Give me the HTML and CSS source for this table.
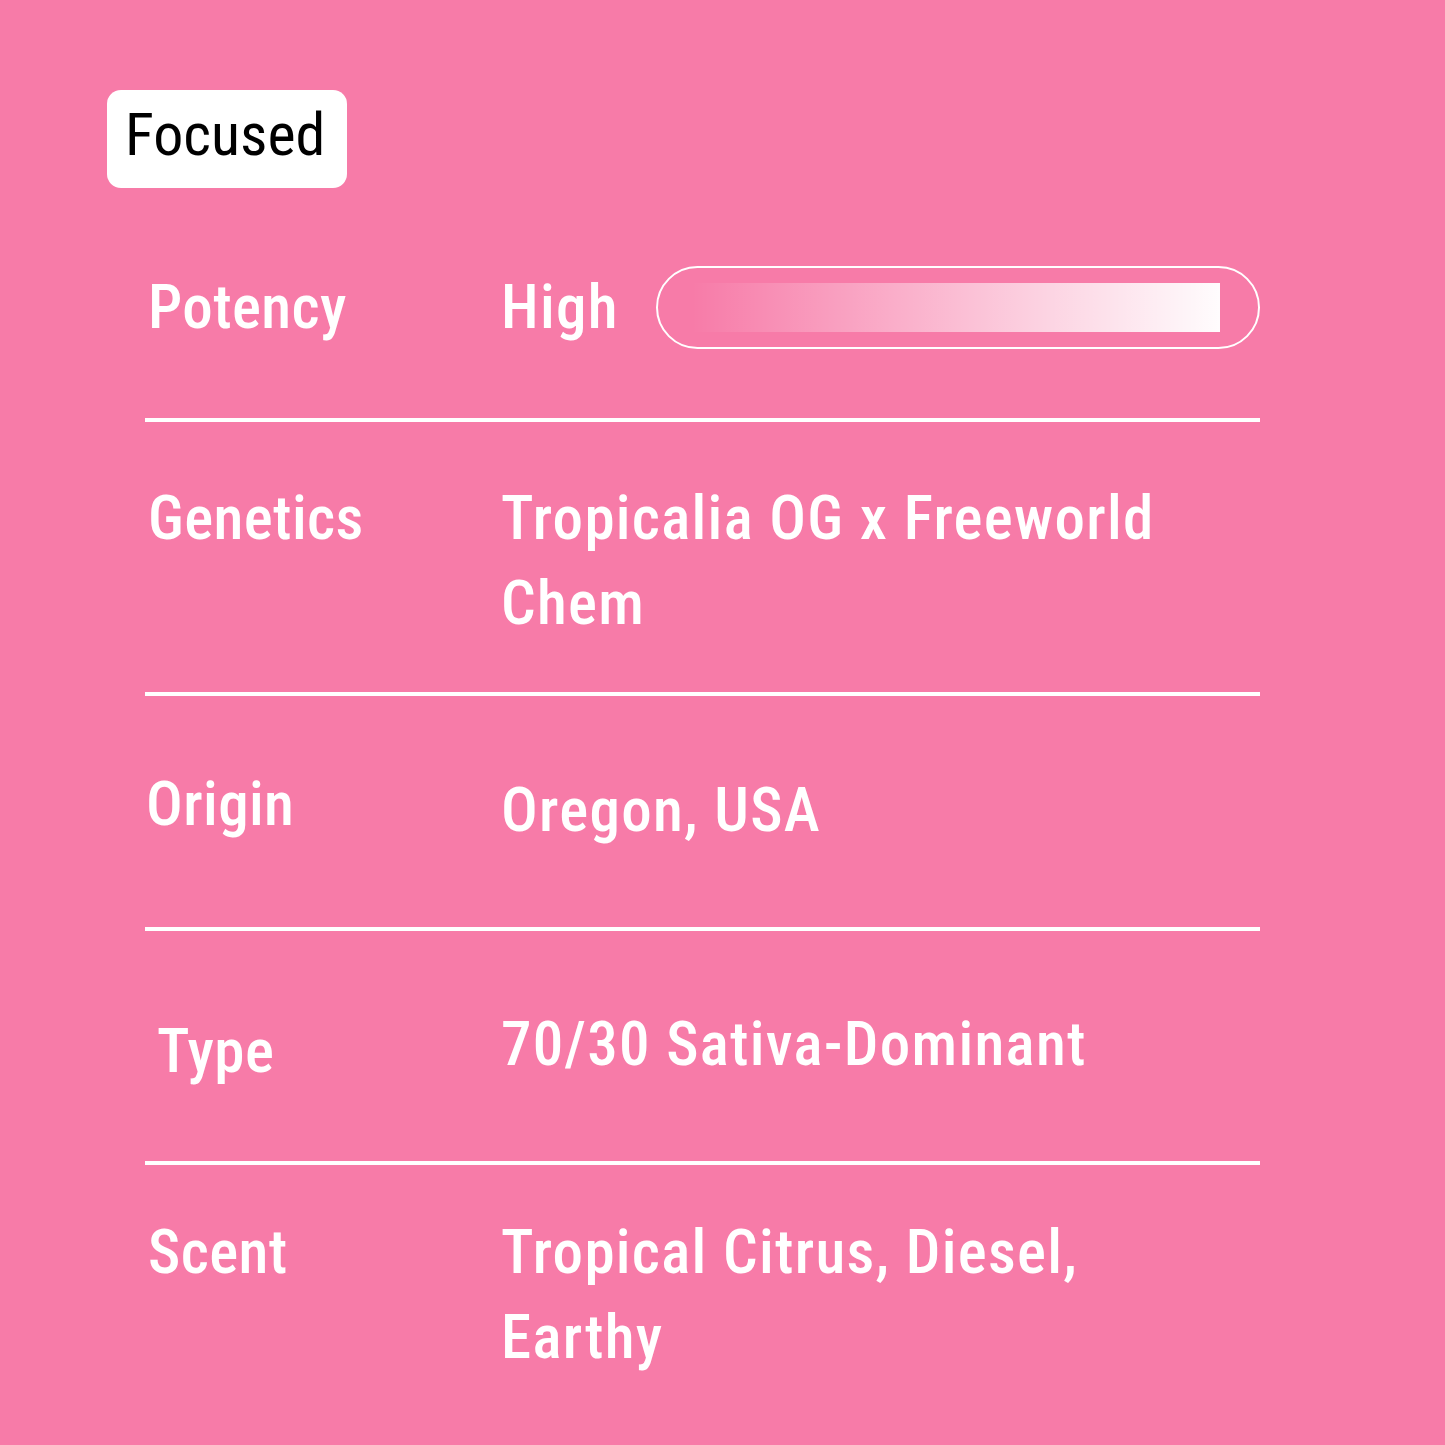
FILE: index.html
```html
<!DOCTYPE html>
<html lang="en">
<head>
<meta charset="utf-8">
<title>Strain specs</title>
<link rel="stylesheet" href="styles.css">
</head>
<body>
<main class="page">
  <div class="badge">Focused</div>
  <section class="specs">
    <div class="row row-potency">
      <div class="label">Potency</div>
      <div class="value value-potency">
        <span>High</span>
        <div class="meter"><div class="meter-fill"></div></div>
      </div>
    </div>
    <div class="row row-genetics">
      <div class="label">Genetics</div>
      <div class="value">Tropicalia OG x Freeworld Chem</div>
    </div>
    <div class="row row-origin">
      <div class="label">Origin</div>
      <div class="value">Oregon, USA</div>
    </div>
    <div class="row row-type">
      <div class="label label-type">Type</div>
      <div class="value">70/30 Sativa-Dominant</div>
    </div>
    <div class="row row-scent">
      <div class="label">Scent</div>
      <div class="value">Tropical Citrus, Diesel, Earthy</div>
    </div>
  </section>
</main>
</body>
</html>
```

FILE: styles.css
```css
html, body {
  margin: 0;
  padding: 0;
}

body {
  background: #f77ba8;
  width: 1445px;
  height: 1445px;
  overflow: hidden;
  font-family: "Roboto", "Open Sans", sans-serif;
  font-stretch: condensed;
  color: #ffffff;
}

.page {
  padding: 90px 0 0 107px;
}

.badge {
  display: inline-block;
  box-sizing: border-box;
  background: #ffffff;
  color: #000000;
  border-radius: 14px;
  height: 98px;
  line-height: 90px;
  padding: 0 22px 8px 18px;
  font-size: 60px;
  font-weight: 400;
}

.specs {
  margin: 10px 0 0 38px;
  width: 1115px;
}

.row {
  display: grid;
  grid-template-columns: 356px 1fr;
  align-items: start;
  box-sizing: border-box;
  font-size: 61px;
  font-weight: 500;
  line-height: 85px;
}

.row + .row {
  border-top: 4px solid #ffffff;
}

.label {
  padding-left: 3px;
  letter-spacing: 0.4px;
}

.value {
  max-width: 720px;
  letter-spacing: 1.3px;
}

.row-potency { height: 220px; }
.row-potency > * { padding-top: 67px; }

.row-genetics { height: 274px; }
.row-genetics > * { padding-top: 54px; }

.row-origin { height: 235px; }
.row-origin > .label { padding-top: 66px; padding-left: 1px; }
.row-origin > .value { padding-top: 72px; }

.row-type { height: 234px; }
.row-type > .label { padding-top: 78px; }
.row-type > .value { padding-top: 71px; }

.row-scent { height: 264px; }
.row-scent > * { padding-top: 45px; }

.row-type > .label-type {
  padding-left: 12px;
}

.value-potency {
  display: flex;
  align-items: center;
  gap: 37px;
  max-width: none;
}

.meter {
  flex: 1;
  box-sizing: border-box;
  height: 83px;
  border: 2px solid #ffffff;
  border-radius: 42px;
  display: flex;
  align-items: center;
  padding: 0 38px 0 34px;
}

.meter-fill {
  flex: 1;
  height: 49px;
  background: linear-gradient(90deg, rgba(255, 255, 255, 0) 0%, rgba(255, 255, 255, 0.3) 30%, rgba(255, 255, 255, 0.65) 65%, rgba(255, 255, 255, 0.98) 100%);
}
```
